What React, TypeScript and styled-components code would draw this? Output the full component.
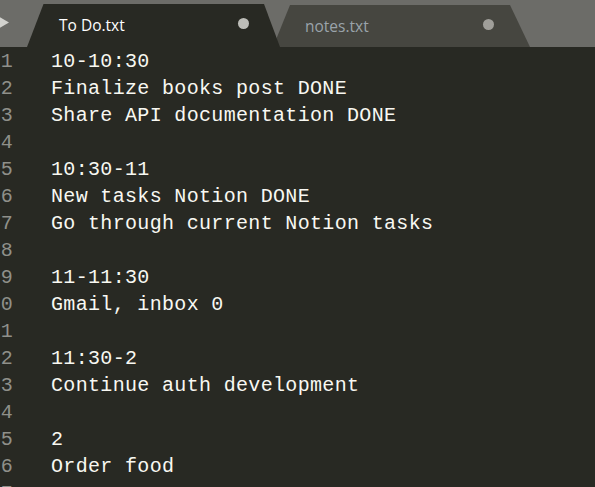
import React from "react";
import styled, { createGlobalStyle } from "styled-components";

const Global = createGlobalStyle`
  html, body {
    margin: 0;
    padding: 0;
    background: #282923;
    overflow: hidden;
  }
  #root { width: 595px; height: 487px; overflow: hidden; }
`;

const Window = styled.div`
  width: 595px;
  height: 487px;
  display: flex;
  flex-direction: column;
  background: #282923;
  overflow: hidden;
`;

const TabBar = styled.div`
  position: relative;
  height: 47px;
  flex: none;
  background: #6c6c68;
  display: flex;
  align-items: flex-end;
`;

const ScrollArrow = styled.svg`
  position: absolute;
  left: 0;
  top: 16px;
`;

const Tab = styled.div<{ $active?: boolean; $w: number; $l: number; $r: number }>`
  position: relative;
  z-index: ${(p) => (p.$active ? 2 : 1)};
  width: ${(p) => p.$w}px;
  height: ${(p) => (p.$active ? 43 : 42)}px;
  margin-left: ${(p) => (p.$active ? "27px" : "-7px")};
  background: ${(p) => (p.$active ? "#282923" : "#464640")};
  clip-path: polygon(
    ${(p) => p.$l}px 0,
    calc(100% - ${(p) => p.$r}px) 0,
    100% 100%,
    0 100%
  );
  display: flex;
  align-items: center;
  padding-left: 32px;
  box-sizing: border-box;
  font-family: "Open Sans", "Noto Sans", sans-serif;
  font-size: 15.5px;
  color: ${(p) => (p.$active ? "#ffffff" : "#9aa3aa")};
`;

const TabLabel = styled.span`
  flex: 1;
  margin-top: -1px;
`;

const Dot = styled.span<{ $active?: boolean }>`
  width: 11px;
  height: 11px;
  border-radius: 50%;
  background: ${(p) => (p.$active ? "#bdbdb8" : "#a09f9a")};
  margin-right: ${(p) => (p.$active ? 31 : 36)}px;
  margin-top: -4px;
`;

const Editor = styled.div`
  flex: 1;
  display: flex;
  align-items: flex-start;
  overflow: hidden;
  padding-top: 1px;
  font-family: "Liberation Mono", monospace;
  font-size: 20px;
  letter-spacing: 0.33px;
  line-height: 27px;
`;

const Gutter = styled.div`
  width: 13px;
  flex: none;
  display: flex;
  flex-direction: column;
  color: #8f908a;
`;

const LineNo = styled.div`
  display: flex;
  justify-content: flex-end;
  overflow: hidden;
  white-space: nowrap;
  height: 27px;
  flex: none;
`;

const Code = styled.div`
  margin-left: 38px;
  flex: none;
  display: flex;
  flex-direction: column;
  color: #f8f8f2;
`;

const Line = styled.div`
  height: 27px;
  flex: none;
  white-space: pre;
`;

const lines = [
  "10-10:30",
  "Finalize books post DONE",
  "Share API documentation DONE",
  "",
  "10:30-11",
  "New tasks Notion DONE",
  "Go through current Notion tasks",
  "",
  "11-11:30",
  "Gmail, inbox 0",
  "",
  "11:30-2",
  "Continue auth development",
  "",
  "2",
  "Order food",
  "",
];

export default function App() {
  return (
    <Window>
      <Global />
      <TabBar>
        <ScrollArrow width="10" height="13" viewBox="0 0 10 13">
          <polygon points="-2,0 9,6.5 -2,13" fill="#d2d2ce" />
        </ScrollArrow>
        <Tab $active $w={253} $l={16.5} $r={16}>
          <TabLabel>To Do.txt</TabLabel>
          <Dot $active />
        </Tab>
        <Tab $w={257} $l={17} $r={20}>
          <TabLabel>notes.txt</TabLabel>
          <Dot />
        </Tab>
      </TabBar>
      <Editor>
        <Gutter>
          {lines.map((_, i) => (
            <LineNo key={i}>{i + 1}</LineNo>
          ))}
        </Gutter>
        <Code>
          {lines.map((l, i) => (
            <Line key={i}>{l}</Line>
          ))}
        </Code>
      </Editor>
    </Window>
  );
}
